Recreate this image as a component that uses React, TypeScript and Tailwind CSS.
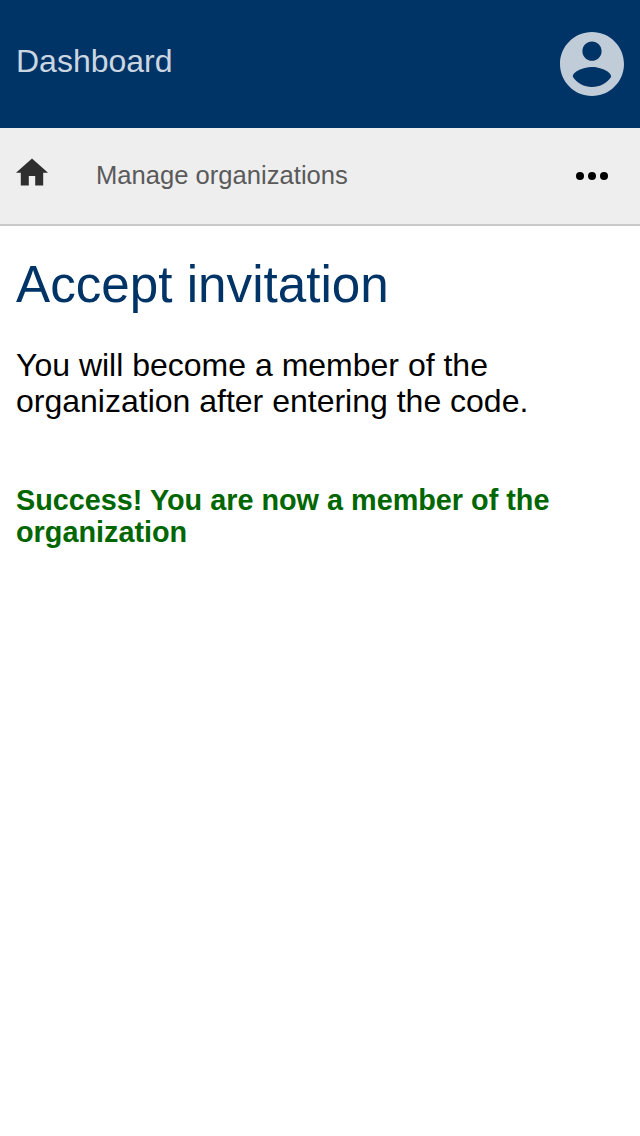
export default function App() {
  return (
    <div className="min-h-[1136px] w-full bg-white font-['Liberation_Sans',Arial,sans-serif]">
      <header className="flex h-32 items-center justify-between bg-[#003366] px-4">
        <span className="pb-[6px] text-[32px] leading-9 text-[#ccd6e0]">Dashboard</span>
        <svg className="size-16" viewBox="2 2 20 20" fill="#c0ccd8" aria-hidden="true">
          <path d="M12 2C6.48 2 2 6.48 2 12s4.48 10 10 10 10-4.48 10-10S17.52 2 12 2zm0 3c1.66 0 3 1.34 3 3s-1.34 3-3 3-3-1.34-3-3 1.34-3 3-3zm0 14.2c-2.5 0-4.71-1.28-6-3.22.03-1.99 4-3.08 6-3.08 1.99 0 5.97 1.09 6 3.08-1.29 1.94-3.5 3.22-6 3.22z" />
        </svg>
      </header>
      <nav className="flex h-[98px] items-center border-b-2 border-[#c8c8c8] bg-[#eeeeee] pr-8 pl-4">
        <svg className="mb-2 h-7 w-8" viewBox="2 2.75 20 17.5" fill="#2e2e2e" aria-hidden="true">
          <path d="M10 20v-6h4v6h5v-8h3L12 3 2 12h3v8z" />
        </svg>
        <span className="mb-0.5 ml-12 text-[25.6px] leading-8 text-[#5a5a5a]">Manage organizations</span>
        <svg className="ml-auto h-2 w-8" viewBox="0 0 32 8" fill="#000" aria-hidden="true">
          <circle cx="4" cy="4" r="4" />
          <circle cx="16" cy="4" r="4" />
          <circle cx="28" cy="4" r="4" />
        </svg>
      </nav>
      <main className="px-4 pt-[29px]">
        <h1 className="text-[51.2px] leading-[60px] text-[#003366]">Accept invitation</h1>
        <p className="mt-8 text-[32px] leading-9 text-black">You will become a member of the organization after entering the code.</p>
        <p className="mt-[65px] text-[28.8px] leading-8 font-bold text-[#006600]">Success! You are now a member of the organization</p>
      </main>
    </div>
  );
}
